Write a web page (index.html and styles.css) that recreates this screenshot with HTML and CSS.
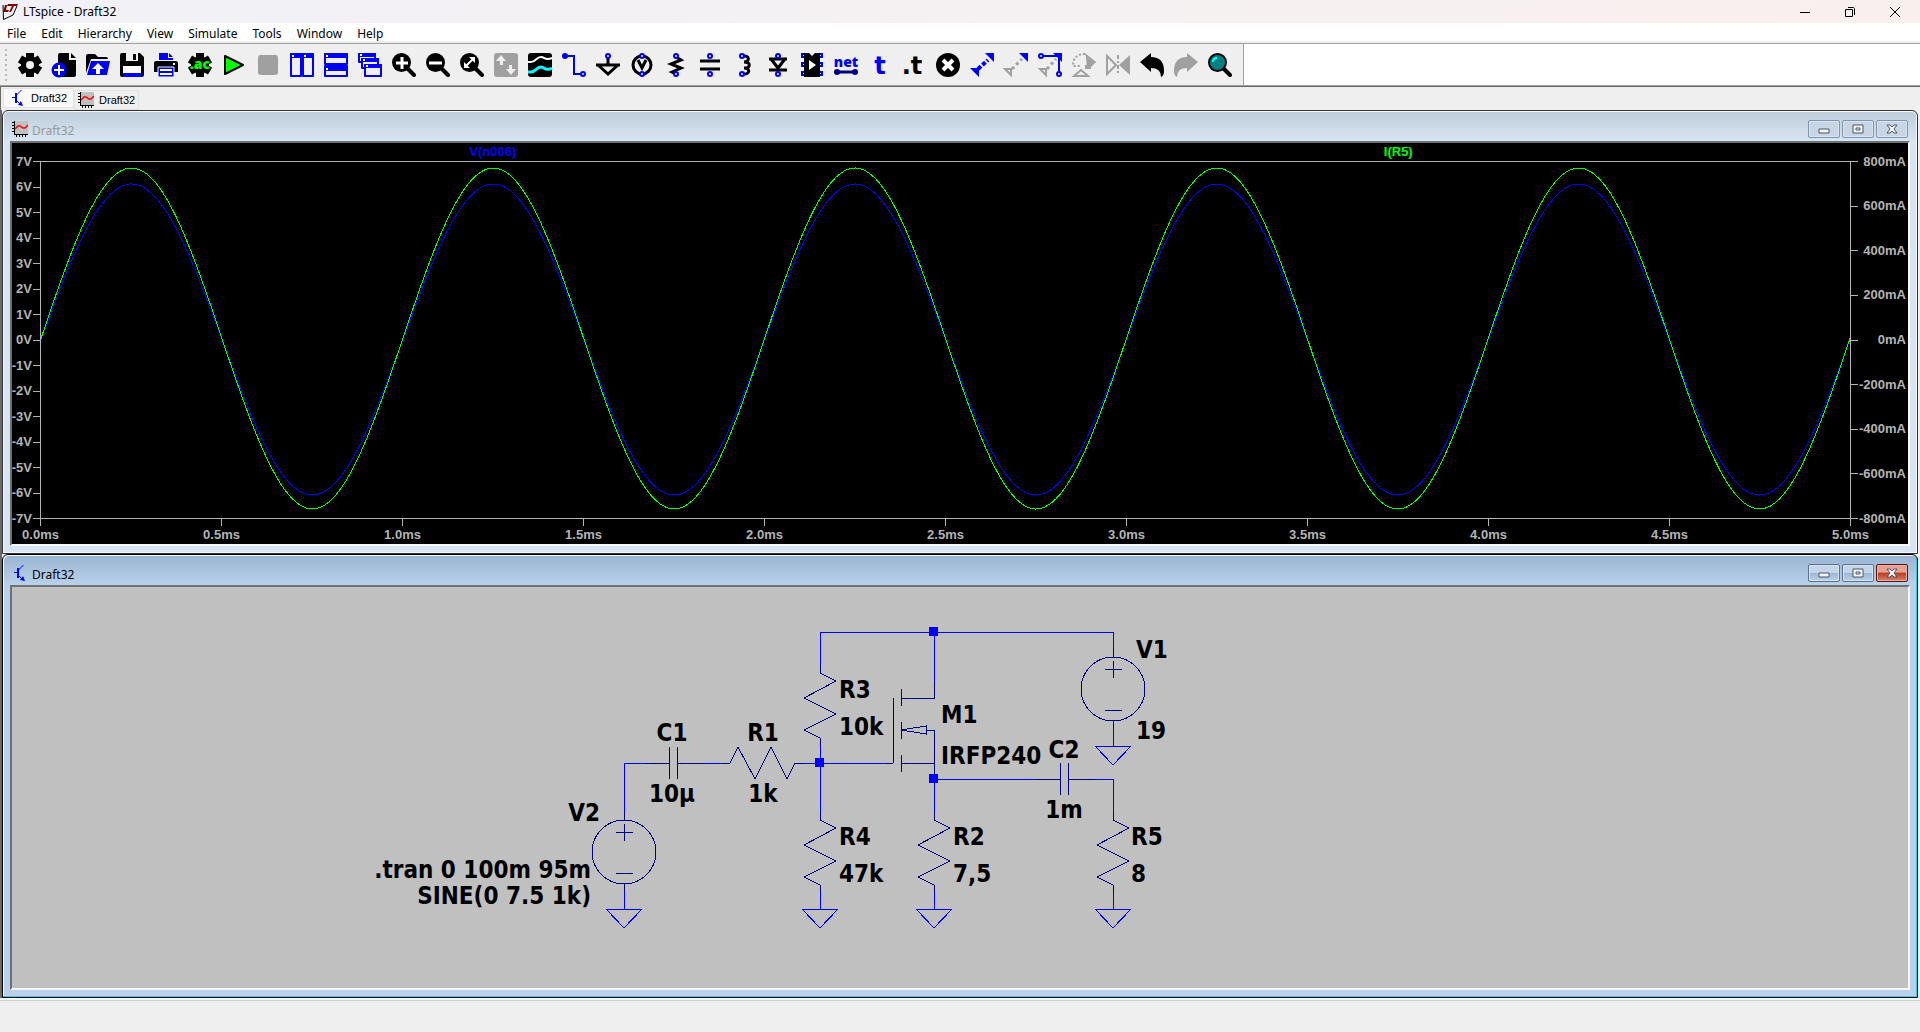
FILE: index.html
```html
<!DOCTYPE html>
<html lang="en">
<head>
    <meta charset="utf-8" />
    <meta name="viewport" content="width=device-width, initial-scale=1" />
    <title>LTspice - Draft32</title>
    <link rel="stylesheet" href="styles.css">
</head>
<body>
    <!-- shared shapes -->
    <svg class="defs" width="0" height="0" aria-hidden="true">
        <symbol id="chart" viewBox="0 0 16 16">
            <path fill="#c0c0c0" d="M3 0h13v14H3z"/>
            <path fill="none" stroke="#000" shape-rendering="crispEdges" d="M2.500 0v14M2 13.500h14M0 1.500h2M0 4.500h2M0 7.500h2M0 10.500h2M4.500 14v2M7.500 14v2M10.500 14v2M13.500 14v2"/>
            <path fill="none" stroke="#f00" stroke-width="1.500" d="M3 8l3-3h2l3 2h2l3-3"/>
        </symbol>
        <symbol id="transistor" viewBox="0 0 16 16">
            <path fill="none" stroke="#00f" d="M2 7.500h4M11.500 0L6 5.500M6 10l5 5"/>
            <path stroke="#00f" stroke-width="2" d="M6 3v10"/>
            <path fill="#00f" d="M13 16l-5-1 3-4z"/>
        </symbol>
        <symbol id="gear" viewBox="0 0 24 24">
            <circle cx="12" cy="12" r="9"/>
            <path stroke="#000" stroke-width="8" stroke-linejoin="round" d="M12 0v24M2 6l20 12M2 18l20-12"/>
        </symbol>
        <symbol id="lens" viewBox="0 0 24 24">
            <path stroke="#000" stroke-width="4" stroke-linecap="round" d="M15 15l7 7"/>
            <circle cx="9.500" cy="9.500" r="9.500"/>
        </symbol>
        <symbol id="pin" viewBox="0 0 6 6">
            <circle cx="3" cy="3" r="2" fill="#efefef" stroke="#00f" stroke-width="2"/>
        </symbol>
    </svg>

    <header class="titlebar">
        <svg class="app-icon" width="16" height="16" viewBox="0 0 16 16">
            <path fill="none" stroke="#000" d="M1 1l.5 14.500L11 11l4-9"/>
            <path fill="#800000" d="M3 1h2L4 6h3l-1 2H1zM6 0h10l-1 2h-3l-3 6H7l3-6H5z"/>
        </svg>
        <span class="caption">LTspice - Draft32</span>
        <button class="sys" aria-label="Minimize"><svg width="10" height="10"><path d="M0 5.500h10"/></svg></button>
        <button class="sys" aria-label="Restore"><svg width="10" height="10"><path d="M.5 2.500h7v7h-7zM3 .5h5.500l1 1V8"/></svg></button>
        <button class="sys" aria-label="Close"><svg width="10" height="10"><path d="M0 0l10 10M10 0L0 10"/></svg></button>
    </header>

    <nav class="menubar">
        <button>File</button>
        <button>Edit</button>
        <button>Hierarchy</button>
        <button>View</button>
        <button>Simulate</button>
        <button>Tools</button>
        <button>Window</button>
        <button>Help</button>
    </nav>

    <div class="toolbar-row">
        <div class="toolbar">
            <span class="grip"></span>
            <button aria-label="Settings"><svg viewBox="0 0 24 24"><use href="#gear"/><circle cx="12" cy="12" r="4" fill="#efefef"/></svg></button>
            <button aria-label="New"><svg viewBox="0 0 24 24">
                <path d="M8 0h9v7h7v15q0 2-2 2H8q-2 0-2-2V2q0-2 2-2z"/><path d="M19 0l5 5h-5z"/>
                <circle cx="7" cy="17" r="7.500" fill="#00f"/><path stroke="#fff" stroke-width="2" d="M2 17h10M7 12v10"/></svg></button>
            <button aria-label="Open"><svg viewBox="0 0 24 24">
                <path d="M0 20V3q0-2 2-2h7l3 3h8q2 0 2 2H5z"/><path fill="#00f" d="M5 8h19l-3 14H1z"/>
                <path fill="#fff" d="M12 10l6 6h-4v5h-4v-5H6z"/></svg></button>
            <button aria-label="Save"><svg viewBox="0 0 24 24">
                <path d="M2 0h18l4 4v18q0 2-2 2H2q-2 0-2-2V2q0-2 2-2z"/><path fill="#efefef" d="M6 0h12v8H6z"/>
                <path d="M13 1h3v6h-3z"/><path fill="#fff" d="M3 13h18v7H3z"/><path fill="#00f" d="M3 20h18v4H3z"/></svg></button>
            <button aria-label="Print"><svg viewBox="0 0 24 24">
                <path fill="#00f" d="M5 0h9v5h5v2H5z"/><path fill="#00f" d="M15 0l4 4h-4z"/><path d="M2 8h20q2 0 2 2v9H0v-9q0-2 2-2z"/>
                <path fill="#00f" stroke="#efefef" d="M4 14h16v10H4z"/><path stroke="#fff" stroke-width="2" d="M6 17h12M6 21h12"/><path fill="#fff" d="M19 10h2v2h-2z"/></svg></button>
            <button aria-label="Configure analysis"><svg viewBox="0 0 24 24"><use href="#gear"/><text x="12" y="16" class="ac">.ac</text></svg></button>
            <button aria-label="Run"><svg viewBox="0 0 24 24"><path fill="#0f0" stroke="#000" stroke-width="2" stroke-linejoin="round" d="M3 3l18 9-18 9z"/></svg></button>
            <button aria-label="Stop" disabled><svg viewBox="0 0 24 24"><rect x="2" y="2" width="20" height="20" rx="3" fill="#a0a0a0"/></svg></button>
            <button aria-label="Tile vertically"><svg viewBox="0 0 24 24">
                <path fill="#00f" d="M0 0h24v5H0z"/><path class="pane" d="M1 1h10v22H1zM13 1h10v22H13z"/><path stroke="#fff" stroke-width="2" d="M2 3h2M14 3h2"/></svg></button>
            <button aria-label="Tile horizontally"><svg viewBox="0 0 24 24">
                <path fill="#00f" d="M0 0h24v5H0zM0 13h24v5H0z"/><path class="pane" d="M1 1h22v10H1zM1 13h22v10H1z"/><path stroke="#fff" stroke-width="2" d="M2 3h2M2 16h2"/></svg></button>
            <button aria-label="Cascade"><svg viewBox="0 0 24 24">
                <path class="pane fill" d="M1 1h16v8H1z"/><path fill="#00f" d="M0 0h18v4H0z"/>
                <path class="pane fill" d="M4 6h16v9H4z"/><path fill="#00f" d="M3 5h18v4H3z"/>
                <path class="pane fill" d="M7 12h16v11H7z"/><path fill="#00f" d="M6 11h18v4H6z"/>
                <path stroke="#fff" stroke-width="2" d="M2 2h2M5 7h2M8 13h2"/></svg></button>
            <button aria-label="Zoom in"><svg viewBox="0 0 24 24"><use href="#lens"/><path stroke="#fff" stroke-width="3" d="M4 10h12M10 4v12"/></svg></button>
            <button aria-label="Zoom out"><svg viewBox="0 0 24 24"><use href="#lens"/><path stroke="#fff" stroke-width="3" d="M3 10h13"/></svg></button>
            <button aria-label="Zoom to fit"><svg viewBox="0 0 24 24"><use href="#lens"/><path stroke="#fff" stroke-width="2" d="M6 13l7-7"/><path fill="#fff" d="M9 4h6v6zM4 9v6h6z"/></svg></button>
            <button aria-label="Autorange" disabled><svg viewBox="0 0 24 24"><rect width="24" height="24" rx="3" fill="#a0a0a0"/><path fill="#efefef" d="M7 2l5 6H9v4H6V8H2zM17 22l-5-6h3v-4h3v4h4z"/></svg></button>
            <button aria-label="Waveforms"><svg viewBox="0 0 24 24"><rect width="24" height="24" rx="3"/>
                <path fill="none" stroke="#fff" stroke-width="2" d="M0 9h3c5 0 5-5 10-5 4 0 4 4 11 1"/><path fill="none" stroke="#0ff" stroke-width="3" d="M0 19h3c5 0 5-5 10-5 4 0 4 5 11 1"/></svg></button>
            <button aria-label="Wire"><svg viewBox="0 0 24 24"><path fill="none" stroke="#00f" stroke-width="2" d="M3 3h9v18h8"/><circle cx="3" cy="3" r="3" fill="#00f"/><use href="#pin" x="18" y="18" width="6" height="6"/></svg></button>
            <button aria-label="Ground"><svg viewBox="0 0 24 24"><path class="line" d="M12 4v8M0 12h24M2 12l10 9 10-9"/><use href="#pin" x="9" y="0" width="6" height="6"/></svg></button>
            <button aria-label="Voltage source"><svg viewBox="0 0 24 24"><circle cx="12" cy="12" r="9" class="line"/><path class="line" d="M8 7l4 8 4-8"/><use href="#pin" x="9" y="0" width="6" height="6"/><use href="#pin" x="9" y="18" width="6" height="6"/></svg></button>
            <button aria-label="Resistor"><svg viewBox="0 0 24 24"><path class="line" d="M12 4l5 3-10 4 10 4-9 4 4 2"/><use href="#pin" x="9" y="0" width="6" height="6"/><use href="#pin" x="9" y="18" width="6" height="6"/></svg></button>
            <button aria-label="Capacitor"><svg viewBox="0 0 24 24"><path class="line" d="M2 8h20M2 16h20"/><use href="#pin" x="9" y="0" width="6" height="6"/><use href="#pin" x="9" y="18" width="6" height="6"/></svg></button>
            <button aria-label="Inductor"><svg viewBox="0 0 24 24"><path class="line" d="M11 3c7-1 7 6 1 6 7 0 7 6 0 6 7 0 6 7-1 6"/><use href="#pin" x="7" y="0" width="6" height="6"/><use href="#pin" x="7" y="18" width="6" height="6"/></svg></button>
            <button aria-label="Diode"><svg viewBox="0 0 24 24"><path class="line" d="M3 6h18M5 6l7 9 7-9M3 17h18"/><use href="#pin" x="9" y="0" width="6" height="6"/><use href="#pin" x="9" y="18" width="6" height="6"/></svg></button>
            <button aria-label="Component"><svg viewBox="0 0 24 24"><path d="M4 0h5l3 3 3-3h5v24H4z"/><path fill="#fff" d="M9 7l7 5-7 5z"/>
                <path fill="none" stroke="#00f" stroke-width="2" d="M4 1H2v3h2M4 10H2v3h2M4 19H2v3h2M20 1h2v3h-2M20 10h2v3h-2M20 19h2v3h-2"/></svg></button>
            <button aria-label="Net name"><svg viewBox="0 0 24 24"><text x="12" y="14" class="net">net</text><path stroke="#000080" stroke-width="3" d="M2 19h20"/><circle cx="3" cy="19" r="3" fill="#000080"/><circle cx="21" cy="19" r="3" fill="#000080"/></svg></button>
            <button aria-label="Text"><svg viewBox="0 0 24 24"><text x="12" y="21" class="tee blue">t</text></svg></button>
            <button aria-label="Directive"><svg viewBox="0 0 24 24"><text x="10" y="21" class="tee">.t</text></svg></button>
            <button aria-label="Delete"><svg viewBox="0 0 24 24"><circle cx="12" cy="12" r="12"/><path stroke="#fff" stroke-width="4" d="M7 7l10 10M17 7L7 17"/></svg></button>
            <button aria-label="Duplicate"><svg viewBox="0 0 24 24"><path fill="#00f" d="M15 0h9v9zM0 15v0h9v9z"/><path stroke="#00f" stroke-width="4" stroke-dasharray="4 2" d="M8 16L18 7"/></svg></button>
            <button aria-label="Move" disabled><svg viewBox="0 0 24 24"><path fill="#00f" d="M15 0h9v9z"/><path fill="none" stroke="#a0a0a0" stroke-width="2" d="M1 16h6v6z"/><path stroke="#a0a0a0" stroke-width="3" stroke-dasharray="3 3" d="M8 16L18 6"/></svg></button>
            <button aria-label="Drag"><svg viewBox="0 0 24 24"><path fill="#00f" d="M15 0h9v9z"/><path fill="none" stroke="#a0a0a0" stroke-width="2" d="M2 16h6v6z"/><path stroke="#a0a0a0" stroke-width="3" stroke-dasharray="3 3" d="M9 16l9-10"/>
                <path fill="none" stroke="#00f" stroke-width="2" d="M4 3h17v16"/><use href="#pin" x="0" y="0" width="6" height="6"/><use href="#pin" x="18" y="18" width="6" height="6"/></svg></button>
            <button aria-label="Rotate" disabled><svg viewBox="0 0 24 24"><path fill="#a0a0a0" d="M13 0l11 9-5 5v2h-6v-4h3z"/><path fill="#a0a0a0" d="M14 2l10 7-9 7z"/><path fill="none" stroke="#a0a0a0" stroke-width="2" stroke-dasharray="2 2" d="M13 1Q1 1 1 13h7"/><path fill="none" stroke="#a0a0a0" stroke-width="2" d="M2 23l7-6 7 6z"/></svg></button>
            <button aria-label="Mirror" disabled><svg viewBox="0 0 24 24"><path fill="none" stroke="#a0a0a0" stroke-width="2" d="M1 3v18l9-9z"/><path fill="#a0a0a0" d="M24 2v20L13 12z"/><path stroke="#a0a0a0" stroke-width="2" stroke-dasharray="4 2 2 2" d="M12 2v20"/></svg></button>
            <button aria-label="Undo"><svg viewBox="0 0 24 24"><path d="M0 9l11-9v4q13 0 13 14 0 5-3 6 0-9-10-9v4z"/></svg></button>
            <button aria-label="Redo" disabled><svg viewBox="0 0 24 24"><path fill="#a0a0a0" d="M24 9L13 0v4Q0 4 0 18q0 5 3 6 0-9 10-9v4z"/></svg></button>
            <button aria-label="Find"><svg viewBox="0 0 24 24"><use href="#lens"/><circle cx="9.500" cy="9.500" r="7.500" fill="#008080"/><path fill="none" stroke="#0ff" stroke-width="2" d="M5 9q0-4 4-4"/></svg></button>
        </div>
    </div>

    <div class="tabs">
        <button class="tab active"><svg width="16" height="16"><use href="#transistor"/></svg>Draft32</button>
        <button class="tab"><svg width="16" height="16"><use href="#chart"/></svg>Draft32</button>
    </div>

    <main class="mdi">
        <section class="window">
            <div class="window-title">
                <svg width="16" height="16"><use href="#chart"/></svg>
                <span>Draft32</span>
                <div class="controls">
                    <button aria-label="Minimize"><svg viewBox="0 0 12 10"><path d="M1 5h10v4H1z"/></svg></button>
                    <button aria-label="Maximize"><svg viewBox="0 0 12 10"><path d="M1 1h10v8H1zM4 4h4v2H4z"/></svg></button>
                    <button aria-label="Close"><svg viewBox="0 0 12 10"><path d="M1 1h3l2 2 2-2h3L8 5l3 4H8L6 7 4 9H1l3-4z"/></svg></button>
                </div>
            </div>
            <div class="window-body plot">
                <div class="traces">
                    <span class="voltage">V(n006)</span>
                    <span class="current">I(R5)</span>
                </div>
                <div class="axis left">
                    <span>7V</span><span>6V</span><span>5V</span><span>4V</span><span>3V</span>
                    <span>2V</span><span>1V</span><span>0V</span><span>-1V</span><span>-2V</span>
                    <span>-3V</span><span>-4V</span><span>-5V</span><span>-6V</span><span>-7V</span>
                </div>
                <svg class="graph" viewBox="0 0 1810 357" preserveAspectRatio="none">
                    <path id="voltage" class="voltage" />
                    <path id="current" class="current" />
                </svg>
                <div class="axis right">
                    <span>800mA</span><span>600mA</span><span>400mA</span><span>200mA</span><span>0mA</span>
                    <span>-200mA</span><span>-400mA</span><span>-600mA</span><span>-800mA</span>
                </div>
                <div class="axis bottom">
                    <span>0.0ms</span><span>0.5ms</span><span>1.0ms</span><span>1.5ms</span><span>2.0ms</span><span>2.5ms</span>
                    <span>3.0ms</span><span>3.5ms</span><span>4.0ms</span><span>4.5ms</span><span>5.0ms</span>
                </div>
            </div>
        </section>

        <section class="window focused">
            <div class="window-title">
                <svg width="16" height="16"><use href="#transistor"/></svg>
                <span>Draft32</span>
                <div class="controls">
                    <button aria-label="Minimize"><svg viewBox="0 0 12 10"><path d="M1 5h10v4H1z"/></svg></button>
                    <button aria-label="Maximize"><svg viewBox="0 0 12 10"><path d="M1 1h10v8H1zM4 4h4v2H4z"/></svg></button>
                    <button class="close" aria-label="Close"><svg viewBox="0 0 12 10"><path d="M1 1h3l2 2 2-2h3L8 5l3 4H8L6 7 4 9H1l3-4z"/></svg></button>
                </div>
            </div>
            <div class="window-body">
                <svg class="schematic">
                    <defs>
                        <path id="resistor" d="M0-8V0L16 8-16 25 16 41-16 57 0 65V73"/>
                        <path id="capacitor" d="M-24 0H0M0-16V16M8-16V16M8 0H36"/>
                        <path id="source" d="M0-8V0M-32 32a32 32 0 1 0 64 0a32 32 0 1 0-64 0M-8 12H9M0 4V21M-8 53H9M0 64V72"/>
                        <path id="ground" d="M-18 0H18L0 19z"/>
                        <rect id="node" x="-5" y="-5" width="9" height="9"/>
                    </defs>

                    <g class="wire">
                        <path d="M808 78V45H1101V62M922 45V110M612 225V176H640M685 176H710M790 176H874M808 159V225M922 184V225M922 192H1024M1084 192H1101V225"/>
                        <path d="M612 304V322M808 304V322M922 304V322M1101 304V322M1101 141V159"/>
                        <use href="#ground" x="612" y="322"/>
                        <use href="#ground" x="808" y="322"/>
                        <use href="#ground" x="922" y="322"/>
                        <use href="#ground" x="1101" y="322"/>
                        <use href="#ground" x="1101" y="159"/>
                    </g>
                    <g class="part">
                        <use href="#source" x="612" y="233"/>
                        <use href="#source" x="1101" y="70"/>
                        <use href="#capacitor" x="657" y="176"/>
                        <use href="#capacitor" x="1048" y="192"/>
                        <use href="#resistor" transform="translate(718 176) rotate(-90)"/>
                        <use href="#resistor" x="808" y="86"/>
                        <use href="#resistor" x="808" y="233"/>
                        <use href="#resistor" x="922" y="233"/>
                        <use href="#resistor" x="1101" y="233"/>
                        <path d="M874 176H881M881 111V176M889 102V119M889 135V152M889 168V185M889 111H922V95M889 143L914 139V147zM914 143H922V192M889 176H922"/>
                    </g>
                    <g class="dots">
                        <use href="#node" x="922" y="45"/>
                        <use href="#node" x="808" y="176"/>
                        <use href="#node" x="922" y="192"/>
                    </g>
                    <g class="names">
                        <text x="827" y="111">R3</text>
                        <text x="827" y="148">10k</text>
                        <text x="827" y="258">R4</text>
                        <text x="827" y="295">47k</text>
                        <text x="941" y="258">R2</text>
                        <text x="941" y="295">7,5</text>
                        <text x="1119" y="258">R5</text>
                        <text x="1119" y="295">8</text>
                        <text x="929" y="136">M1</text>
                        <text x="929" y="177">IRFP240</text>
                        <text x="1124" y="71">V1</text>
                        <text x="1124" y="152">19</text>
                    </g>
                    <g class="names middle">
                        <text x="660" y="154">C1</text>
                        <text x="660" y="215">10µ</text>
                        <text x="751" y="154">R1</text>
                        <text x="751" y="215">1k</text>
                        <text x="1052" y="171">C2</text>
                        <text x="1052" y="231">1m</text>
                    </g>
                    <g class="names end">
                        <text x="588" y="234">V2</text>
                        <text x="579" y="291">.tran 0 100m 95m</text>
                        <text x="579" y="317">SINE(0 7.5 1k)</text>
                    </g>
                </svg>
            </div>
        </section>
    </main>

    <footer class="statusbar"></footer>

    <script>
        // five periods of a sine, y grows downwards
        function drawSine(id, middle, amplitude) {
            let d = '';
            for (let x = 0; x <= 1810; x += 5) {
                let y = middle - amplitude * Math.sin(x / 362 * 2 * Math.PI);
                d += (x === 0 ? 'M' : 'L') + x + ' ' + y.toFixed(1);
            }
            document.getElementById(id).setAttribute('d', d);
        }

        drawSine('voltage', 178, 156);
        drawSine('current', 177, 171);
    </script>
</body>
</html>
```
FILE: styles.css
```css
* {
    box-sizing: border-box;
}

body {
    display: flex;
    flex-direction: column;
    height: 100vh;
    margin: 0;
    overflow: hidden;
    background-color: #efefef;
    color: #000;
    font-family: "Noto Sans", "Open Sans", sans-serif;
    font-size: 12px;
}

button {
    margin: 0;
    padding: 0;
    border: 0;
    background: none;
    color: inherit;
    font: inherit;
}

svg {
    display: block;
    flex: none;
}

.defs {
    position: absolute;
}

/* application title */
.titlebar {
    display: flex;
    align-items: center;
    height: 23px;
    padding-left: 2px;
    background: linear-gradient(to right, #f1f1f7, #f9f0ee);
}

.caption {
    flex: 1;
    padding-left: 5px;
}

.sys {
    display: flex;
    align-items: center;
    justify-content: center;
    width: 45px;
    height: 20px;
}

.sys:last-child {
    margin-right: 3px;
}

.sys path {
    fill: none;
    stroke: #000;
}

.menubar {
    display: flex;
    height: 20px;
    background-color: #fff;
    border-bottom: 2px solid #efefef;
}

.menubar button {
    padding: 0 8px 0 7px;
    line-height: 22px;
}

.toolbar-row {
    height: 44px;
    background-color: #fff;
    border-top: 1px solid #a0a0a0;
    border-bottom: 1px solid #696969;
    box-shadow: inset 0 -1px #a0a0a0;
}

.toolbar {
    display: flex;
    align-items: center;
    width: max-content;
    height: 41px;
    padding-right: 6px;
    background-color: #efefef;
    border-right: 1px solid #a0a0a0;
}

.grip {
    width: 2px;
    height: 32px;
    margin: 0 6px 0 5px;
    background: repeating-linear-gradient(#b8b8b8 0 2px, #efefef 2px 5px);
}

.toolbar button {
    display: flex;
    justify-content: center;
    width: 34px;
}

.toolbar svg {
    width: 24px;
    height: 24px;
    overflow: visible;
}

.pane {
    fill: none;
    stroke: #00f;
    stroke-width: 2;
    stroke-linejoin: round;
}

.pane.fill {
    fill: #efefef;
}

.line {
    fill: none;
    stroke: #000;
    stroke-width: 3;
}

.ac,
.net,
.tee {
    font-family: "Noto Sans", sans-serif;
    font-weight: 900;
    text-anchor: middle;
}

.ac {
    fill: #0f0;
    font-size: 14px;
}

.net {
    fill: #00f;
    font-size: 14px;
}

.tee {
    font-family: "DejaVu Sans", sans-serif;
    font-size: 24px;
}

.tee.blue {
    fill: #00f;
}

/* document tabs */
.tabs {
    display: flex;
    align-items: flex-start;
    height: 23px;
    padding: 1px 0 0 2px;
    border-left: 1px solid #696969;
}

.tab {
    display: flex;
    align-items: center;
    gap: 5px;
    height: 20px;
    margin-top: 2px;
    padding: 0 3px 0 3px;
    border: 1px solid #e2e2e2;
    font-family: "Liberation Sans", sans-serif;
    font-size: 11px;
}

.tab.active {
    margin-top: 0;
    padding: 0 6px 0 6px;
    background-color: #f9f9f9;
}

/* document windows */
.mdi {
    display: flex;
    flex: 1;
    flex-direction: column;
    min-height: 0;
    padding: 0 2px;
    background: linear-gradient(to right, #696969 2px, #efefef 2px);
}

.window {
    display: flex;
    flex: 1;
    flex-direction: column;
    min-height: 0;
    padding: 0 7px 7px;
    border: 1px solid #333;
    border-radius: 6px 6px 0 0;
    background: linear-gradient(#bfcddb, #d7e4f2 30px);
    box-shadow: inset 0 0 0 1px #f4f8fc;
}

.window.focused {
    border-color: #000;
    background: linear-gradient(#99b4d1, #b9d1ea 30px);
    box-shadow: inset -1px -1px #2fcde8, inset 1px 1px #f4f8fc;
}

.window-title {
    display: flex;
    align-items: center;
    height: 30px;
    padding: 6px 2px 0;
    color: #999;
}

.focused .window-title {
    color: #000;
}

.window-title span {
    flex: 1;
    padding: 2px 0 0 4px;
}

.controls {
    display: flex;
    gap: 2px;
}

.controls button {
    display: flex;
    align-items: center;
    justify-content: center;
    width: 32px;
    height: 18px;
    border: 1px solid #8293ad;
    border-radius: 2px;
    background-color: #c7d5e4;
    box-shadow: inset 0 0 0 1px #d8e4f0;
}

.focused .controls button {
    border-color: #5d6f8d;
    background: linear-gradient(#c3d5e9 50%, #9db7d3 50%, #b9d1ea);
}

.focused .controls .close {
    border-color: #5a1414;
    background: linear-gradient(#e6a192 45%, #bd3a22 50%, #d08468);
    box-shadow: inset 0 0 0 1px #e9ada2;
}

.controls svg {
    width: 12px;
    height: 10px;
}

.controls path {
    fill: #f4f4f4;
    stroke: #4c5468;
}

.window-body {
    flex: 1;
    min-height: 0;
    border: 2px solid #707070;
    border-right-color: #f8f8f8;
    border-bottom-color: #f8f8f8;
    background-color: #c0c0c0;
}

/* waveform plot */
.plot {
    display: grid;
    grid-template-columns: 28px 1fr 57px;
    grid-template-rows: 18px 1fr 25px;
    background-color: #000;
    color: #b4b4b4;
    font-family: "Liberation Sans", Arial, sans-serif;
    font-size: 13px;
    font-weight: bold;
    line-height: 16px;
}

.traces {
    display: flex;
    grid-area: 1 / 2;
    line-height: 18px;
}

.traces span {
    flex: 1;
    text-align: center;
}

.traces .voltage {
    color: #00f;
}

.traces .current {
    color: #0f0;
}

.graph {
    grid-area: 2 / 2;
    width: 100%;
    height: 100%;
    min-height: 0;
    border: 1px solid #b4b4b4;
}

.graph path {
    fill: none;
    shape-rendering: crispEdges;
    vector-effect: non-scaling-stroke;
}

.graph .voltage {
    stroke: #00f;
}

.graph .current {
    stroke: #0f0;
}

.axis {
    display: flex;
    justify-content: space-between;
    white-space: nowrap;
}

.axis span {
    display: flex;
    align-items: center;
}

.axis.left,
.axis.right {
    flex-direction: column;
}

.axis.left span,
.axis.right span {
    justify-content: flex-end;
    height: 1px;
}

.axis.left {
    grid-area: 2 / 1;
}

.axis.right {
    grid-area: 2 / 3;
    padding-right: 2px;
}

.axis.left span::after,
.axis.right span::before,
.axis.bottom span::before {
    flex: none;
    width: 7px;
    height: 1px;
    background-color: #b4b4b4;
    content: "";
}

.axis.left span::after {
    margin-left: 1px;
}

.axis.right span::before {
    margin-right: auto;
}

.axis.bottom {
    grid-area: 3 / 2;
}

.axis.bottom span {
    flex-direction: column;
    width: 1px;
}

.axis.bottom span::before {
    width: 1px;
    height: 7px;
    margin-bottom: 1px;
}

/* schematic */
.schematic {
    width: 100%;
    height: 100%;
}

.wire,
.part {
    fill: none;
    shape-rendering: crispEdges;
}

.wire {
    stroke: #00f;
}

.part {
    stroke: #000080;
}

.dots {
    fill: #00f;
}

.names {
    font-family: "DejaVu Sans Condensed", "Noto Sans", sans-serif;
    font-size: 24px;
    font-weight: bold;
}

.middle {
    text-anchor: middle;
}

.end {
    text-anchor: end;
}

.statusbar {
    height: 34px;
    border-top: 2px solid #f8f8f8;
    box-shadow: inset 0 1px #d0d0d0;
}
```
